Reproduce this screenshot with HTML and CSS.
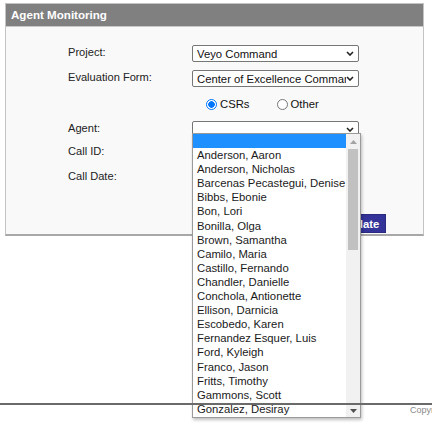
FILE: index.html
```html
<!DOCTYPE html>
<html>
<head>
<meta charset="utf-8">
<link rel="stylesheet" href="styles.css">
</head>
<body>
<div class="page">
  <div class="panel">
    <div class="panel-header">Agent Monitoring</div>
    <div class="form">
      <div class="row r-project">
        <div class="label">Project:</div>
        <div class="select"><span>Veyo Command</span><svg class="chev" width="8" height="5" viewBox="0 0 8 5"><path d="M1 1 L4 4 L7 1" fill="none" stroke="#222" stroke-width="1.6"/></svg></div>
      </div>
      <div class="row r-form">
        <div class="label">Evaluation Form:</div>
        <div class="select"><span class="clip">Center of Excellence Command Center</span><svg class="chev" width="8" height="5" viewBox="0 0 8 5"><path d="M1 1 L4 4 L7 1" fill="none" stroke="#222" stroke-width="1.6"/></svg></div>
      </div>
      <div class="row r-radio">
        <div class="label"></div>
        <div class="radios">
          <span class="radio checked"></span><span class="rtext">CSRs</span>
          <span class="radio other"></span><span class="rtext">Other</span>
        </div>
      </div>
      <div class="row r-agent">
        <div class="label">Agent:</div>
        <div class="select"><span></span><svg class="chev" width="8" height="5" viewBox="0 0 8 5"><path d="M1 1 L4 4 L7 1" fill="none" stroke="#222" stroke-width="1.6"/></svg></div>
      </div>
      <div class="row r-callid">
        <div class="label">Call ID:</div>
        <div class="input"></div>
      </div>
      <div class="row r-date">
        <div class="label">Call Date:</div>
        <div class="input date"></div>
      </div>
      <div class="row r-button">
        <button class="update">Update</button>
      </div>
    </div>
  </div>

  <div class="dropdown">
    <div class="options">
      <div class="opt selected"></div>
      <div class="opt">Anderson, Aaron</div>
      <div class="opt">Anderson, Nicholas</div>
      <div class="opt">Barcenas Pecastegui, Denise</div>
      <div class="opt">Bibbs, Ebonie</div>
      <div class="opt">Bon, Lori</div>
      <div class="opt">Bonilla, Olga</div>
      <div class="opt">Brown, Samantha</div>
      <div class="opt">Camilo, Maria</div>
      <div class="opt">Castillo, Fernando</div>
      <div class="opt">Chandler, Danielle</div>
      <div class="opt">Conchola, Antionette</div>
      <div class="opt">Ellison, Darnicia</div>
      <div class="opt">Escobedo, Karen</div>
      <div class="opt">Fernandez Esquer, Luis</div>
      <div class="opt">Ford, Kyleigh</div>
      <div class="opt">Franco, Jason</div>
      <div class="opt">Fritts, Timothy</div>
      <div class="opt">Gammons, Scott</div>
      <div class="opt">Gonzalez, Desiray</div>
    </div>
    <div class="scrollbar">
      <svg class="arrow" width="7" height="4" viewBox="0 0 7 4"><path d="M0 4 L3.5 0 L7 4 Z" fill="#a3a3a3"/></svg>
      <div class="track"><div class="thumb"></div></div>
      <svg class="arrow" width="7" height="4" viewBox="0 0 7 4"><path d="M0 0 L3.5 4 L7 0 Z" fill="#505050"/></svg>
    </div>
  </div>

  <div class="footer">
    <div class="copyright">Copyright © Veyo. All rights reserved.</div>
  </div>
</div>
</body>
</html>
```
FILE: styles.css
```css
html, body {
  margin: 0;
  padding: 0;
  background: #ffffff;
  overflow: hidden;
}
body {
  font-family: "Liberation Sans", Arial, sans-serif;
  color: #222;
  width: 432px;
  height: 427px;
}
.page {
  position: relative;
  padding-top: 3px;
}
.panel {
  margin-left: 5px;
  width: 417px;
  height: 230px;
  border: 1px solid #c4c4c4;
  border-bottom: 2px solid #a8a8a8;
  background: #f9f9f9;
}
.panel-header {
  height: 22px;
  background: #808080;
  color: #fff;
  font-weight: bold;
  font-size: 11.6px;
  line-height: 22px;
  padding-left: 5px;
  border-bottom: 1px solid #c8c8c8;
}
.form {
  padding-left: 62px;
  display: flex;
  flex-direction: column;
}
.row {
  display: flex;
  align-items: flex-start;
  height: 17px;
}
.r-project { margin-top: 18px; }
.r-form { margin-top: 8px; }
.r-radio { margin-top: 9px; height: 16px; align-items: center; }
.r-agent { margin-top: 9px; }
.r-callid { margin-top: 6px; }
.r-date { margin-top: 8px; }
.r-button { margin-top: 28px; height: 19px; }
.label {
  width: 124px;
  font-size: 11.1px;
  line-height: 13px;
  margin-top: 1px;
  color: #222;
}
.select {
  height: 15px;
  border: 1px solid #767676;
  border-radius: 2px;
  background: #fff;
  display: flex;
  align-items: center;
  justify-content: space-between;
  padding: 0 4px 0 4px;
  box-sizing: content-box;
  font-size: 11.3px;
  color: #111;
  width: 157px;
}
.select .clip {
  overflow: hidden;
  white-space: nowrap;
  width: 149px;
}
.chev {
  flex: none;
}
.radios {
  display: flex;
  align-items: center;
  font-size: 11.3px;
  color: #111;
  padding-left: 14px;
}
.radio {
  width: 9px;
  height: 9px;
  border-radius: 50%;
  border: 1px solid #767676;
  background: #fff;
  display: inline-block;
  box-sizing: content-box;
}
.radio.checked {
  border-color: #0075ff;
  background: radial-gradient(circle, #0075ff 0 3px, #fff 3.5px);
}
.radio.other {
  margin-left: 27px;
}
.rtext {
  margin-left: 3px;
}
.input {
  width: 120px;
  height: 15px;
  border: 1px solid #8a8a8a;
  background: #fff;
}
.input.date {
  height: 17px;
}
.update {
  margin-left: 266px;
  height: 19px;
  padding: 0 6px;
  border: 1px solid #2a2a80;
  background: #333399;
  color: #fff;
  font-family: "Liberation Sans", Arial, sans-serif;
  font-weight: bold;
  font-size: 11.3px;
}
.dropdown {
  position: absolute;
  left: 192px;
  top: 133px;
  width: 167px;
  height: 283px;
  border: 1px solid #9a9a9a;
  background: #fff;
  box-shadow: 1px 2px 3px rgba(0, 0, 0, 0.25);
  display: flex;
}
.options {
  flex: 1;
  display: flex;
  flex-direction: column;
}
.opt {
  height: 14.1px;
  line-height: 14.1px;
  font-size: 11.3px;
  padding-left: 4px;
  color: #1a1a1a;
  white-space: nowrap;
}
.opt.selected {
  background: #1e90ff;
}
.scrollbar {
  width: 14px;
  background: #f1f1f1;
  display: flex;
  flex-direction: column;
  align-items: center;
  padding: 6px 0 4px;
  gap: 5px;
}
.track {
  flex: 1;
  width: 10px;
}
.thumb {
  width: 10px;
  height: 101px;
  background: #c1c1c1;
}
.arrow {
  flex: none;
}
.footer {
  position: absolute;
  left: 0;
  top: 403px;
  width: 432px;
  border-top: 2px solid #6a6a6a;
}
.copyright {
  margin-left: 410px;
  padding-top: 0;
  font-size: 9px;
  line-height: 10px;
  color: #8a8a8a;
  white-space: nowrap;
}
```
